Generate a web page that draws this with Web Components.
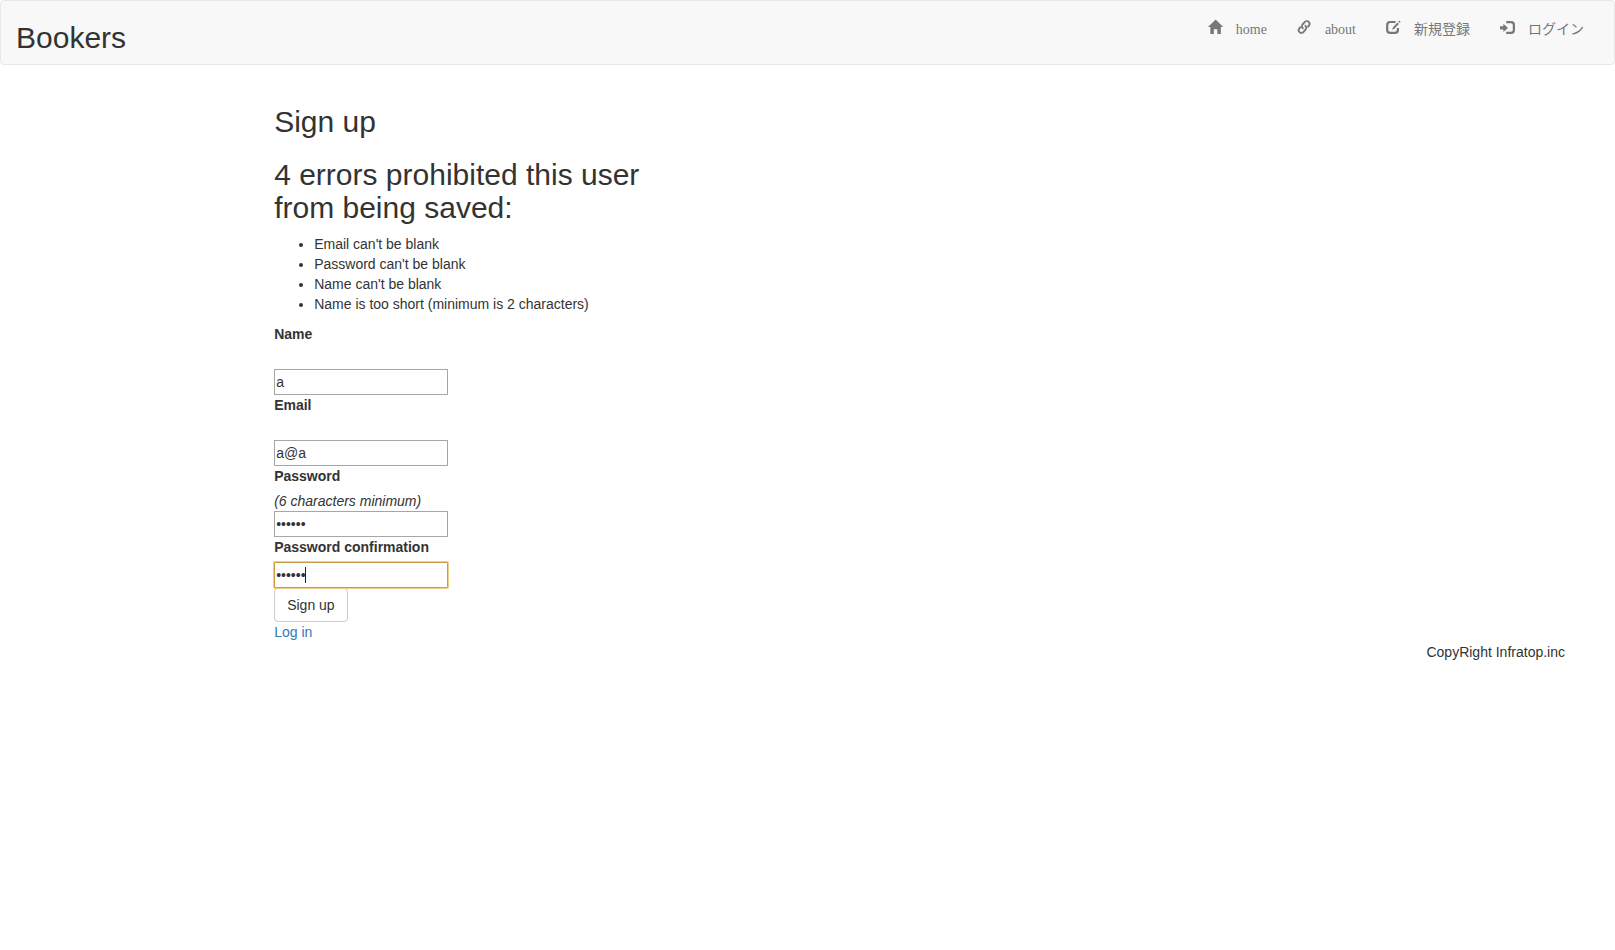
<!DOCTYPE html>
<html lang="ja">
<head>
<meta charset="utf-8">
<title>Bookers</title>
<style>
body{margin:0;background:#fff;color:#333;font:14px/20px "Liberation Sans",Arial,sans-serif}
</style>
</head>
<body>
<site-nav>
  <nav-item icon="home">home</nav-item>
  <nav-item icon="link">about</nav-item>
  <nav-item icon="edit">新規登録</nav-item>
  <nav-item icon="login">ログイン</nav-item>
</site-nav>
<sign-up-page></sign-up-page>
<site-footer>CopyRight Infratop.inc</site-footer>
<script>
const define = (name, html, setup) => customElements.define(name, class extends HTMLElement {
  constructor() {
    super();
    this.attachShadow({ mode: 'open' }).innerHTML = html;
  }
  connectedCallback() { if (setup) setup(this, this.shadowRoot); }
});

const linkHalf = 'M1.9 2.8H4.1A2.8 2.8 0 0 0 4.1 -2.8H0.8A2.8 2.8 0 0 0 -1.7 0.7';
const icons = {
  home: '<path transform="translate(0 15) scale(.0116667 -.0116667)" d="M18 618l620 608q8 7 18.5 7t17.5 -7l608 -608q8 -8 5.5 -13t-12.5 -5h-175v-575q0 -10 -7.5 -17.5t-17.5 -7.5h-250q-10 0 -17.5 7.5t-7.5 17.5v375h-300v-375q0 -10 -7.5 -17.5t-17.5 -7.5h-250q-10 0 -17.5 7.5t-7.5 17.5v575h-175q-10 0 -12.5 5t5.5 13z"/>',
  link: `<g fill="none" stroke="currentColor" stroke-width="1.8" transform="translate(7.1 8) rotate(-50)"><path d="${linkHalf}"/><path d="${linkHalf}" transform="rotate(180)"/></g>`,
  edit: '<path d="M9.6 3H4.1Q1.2 3 1.2 5.9V11Q1.2 13.9 4.1 13.9H9Q11.9 13.9 11.9 11V9" fill="none" stroke="currentColor" stroke-width="2.2"/><path d="M6.2 10.7L6.8 8.4L11.4 3.4L12.9 4.9L8.3 9.8ZM12.3 2.5L13.1 1.6L14.6 3L13.8 4Z"/>',
  login: '<path d="M0 7.2H3.4V4.7L8 8.9L3.4 13V10.6H0Z"/><path d="M6.2 3.1H11Q13.9 3.1 13.9 6V11Q13.9 13.9 11 13.9H6.2" fill="none" stroke="currentColor" stroke-width="2.2"/>'
};

define('nav-item', `<style>
:host{display:block;padding:0 15px;color:#777;font:14px/14px "Liberation Serif","Noto Sans CJK JP",serif}
a{display:flex;gap:14px;color:inherit;text-decoration:none}
svg{display:block;width:14px;height:16px;margin-top:-1px;overflow:visible;fill:currentColor}
.label{padding-top:3px;white-space:nowrap}
</style><a><svg viewBox="0 0 14 16"></svg><span class="label"><slot></slot></span></a>`,
(el, root) => { root.querySelector('svg').innerHTML = icons[el.getAttribute('icon')]; });

define('site-nav', `<style>
:host{display:flex;justify-content:space-between;box-sizing:border-box;height:65px;padding:0 15px;margin-bottom:20px;background:#f8f8f8;border:1px solid #e7e7e7;border-radius:4px}
h2{margin:20px 0 10px;font-size:30px;line-height:33px;font-weight:500}
nav{display:flex;align-items:flex-start;padding-top:19px}
</style><h2>Bookers</h2><nav><slot></slot></nav>`);

define('error-list', `<style>
:host{display:block}
h2{margin:20px 0 10px;font-size:30px;line-height:33px;font-weight:500}
ul{margin:0 0 10px;padding-left:40px}
</style><h2>4 errors prohibited this user from being saved:</h2>
<ul><li>Email can't be blank</li><li>Password can't be blank</li><li>Name can't be blank</li><li>Name is too short (minimum is 2 characters)</li></ul>`);

define('form-field', `<style>
:host{display:block}
label{display:block;margin-bottom:5px;font-weight:700}
.hint{min-height:20px;font-style:italic}
:host([compact]) .hint{display:none}
.box{position:relative;width:174px;height:26px}
input{display:block;box-sizing:border-box;width:174px;height:26px;margin:0;padding:2px 1px;border:1px solid #a6a6a6;border-radius:0;outline:0;background:#fff;color:#333;font:inherit}
:host([active]) input{border-color:#cb9b48;box-shadow:0 0 0 1px #f0cd88;border-radius:1px}
.caret{display:none;position:absolute;left:31px;top:5px;width:1px;height:16px;background:#222}
:host([active]) .caret{display:block}
</style><label></label><div class="hint"><slot></slot></div><div class="box"><input><i class="caret"></i></div>`,
(el, root) => {
  root.querySelector('label').textContent = el.getAttribute('label');
  const input = root.querySelector('input');
  input.type = el.getAttribute('type') || 'text';
  input.value = el.getAttribute('value');
});

define('submit-button', `<style>
:host{display:block;height:34px}
button{display:block;box-sizing:border-box;height:34px;margin:0;padding:6px 12px;border:1px solid #ccc;border-radius:4px;background:#fff;color:#333;font:inherit}
</style><button type="button"><slot></slot></button>`);

define('sign-up-page', `<style>
:host{display:flow-root;width:375px;margin-left:274.17px}
h2{margin:20px 0;font-size:30px;line-height:33px;font-weight:500}
a{display:block;color:#337ab7;text-decoration:none}
</style>
<h2>Sign up</h2>
<error-list></error-list>
<form-field label="Name" value="a"></form-field>
<form-field label="Email" value="a@a"></form-field>
<form-field label="Password" type="password" value="aaaaaa">(6 characters minimum)</form-field>
<form-field label="Password confirmation" type="password" value="aaaaaa" compact active></form-field>
<submit-button>Sign up</submit-button>
<a>Log in</a>`);

define('site-footer', `<style>
:host{display:block;padding-right:50px;text-align:right}
</style><slot></slot>`);
</script>
</body>
</html>
